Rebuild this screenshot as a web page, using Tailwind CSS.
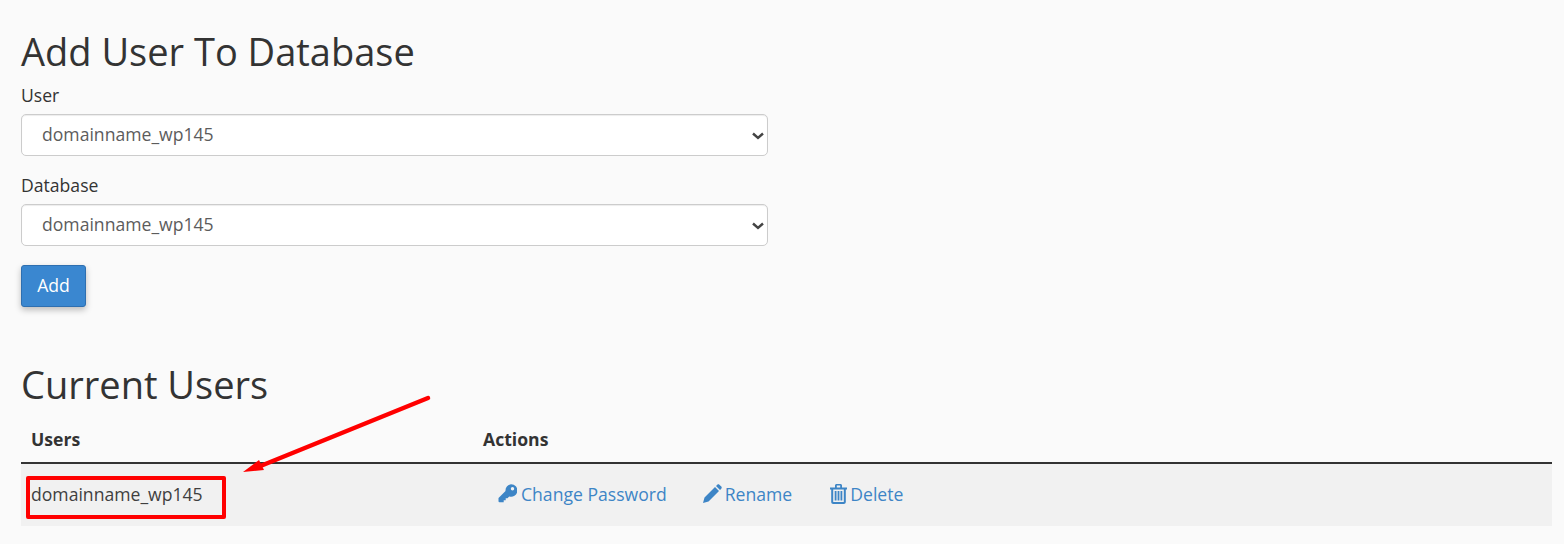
<!DOCTYPE html>
<html>
<head>
<meta charset="utf-8">
<script src="https://cdn.jsdelivr.net/npm/@tailwindcss/browser@4"></script>
</head>
<body class="bg-[#fafafa] font-['Open_Sans',sans-serif] text-[#333] overflow-hidden">
<div class="relative w-[1564px] h-[544px] px-[21px] pt-[28px]">
  <h1 class="text-[38px] leading-[46px] font-normal text-[#333]">Add User To Database</h1>
  <form class="w-[747px]">
    <label class="block mt-[9px] text-[17.6px] leading-[24px] font-medium">User</label>
    <div class="relative mt-[7px]">
      <select class="block w-full h-[42px] pl-[20px] pb-[2px] appearance-none bg-white border border-[#ccc] rounded-[5px] text-[17.6px] text-[#5c5c5c] shadow-[inset_0_1px_1px_rgba(0,0,0,0.075)]"><option>domainname_wp145</option></select>
      <svg class="absolute right-[4px] top-[18px] w-[12px] h-[8px]" viewBox="0 0 12 8" fill="none" stroke="#444" stroke-width="2.400"><path d="M1 1.500l5 4.500 5-4.500"/></svg>
    </div>
    <label class="block mt-[17px] text-[17.6px] leading-[24px] font-medium">Database</label>
    <div class="relative mt-[7px]">
      <select class="block w-full h-[42px] pl-[20px] pb-[2px] appearance-none bg-white border border-[#ccc] rounded-[5px] text-[17.6px] text-[#5c5c5c] shadow-[inset_0_1px_1px_rgba(0,0,0,0.075)]"><option>domainname_wp145</option></select>
      <svg class="absolute right-[4px] top-[18px] w-[12px] h-[8px]" viewBox="0 0 12 8" fill="none" stroke="#444" stroke-width="2.400"><path d="M1 1.500l5 4.500 5-4.500"/></svg>
    </div>
    <button type="button" class="block mt-[19px] w-[65px] h-[42px] pb-[2px] bg-[#3a87d0] border border-[#2e6fb0] rounded-[3px] text-white text-[17.6px] shadow-[0_3px_6px_rgba(0,0,0,0.25)]">Add</button>
  </form>
  <h2 class="mt-[54px] text-[38px] leading-[46px] font-normal text-[#333]">Current Users</h2>
  <table class="mt-[9px] w-[1531px] border-collapse text-[17.6px]">
    <thead>
      <tr class="h-[47px] border-b-2 border-[#333] text-left">
        <th class="w-[452px] pl-[10px] font-bold text-[17.6px]">Users</th>
        <th class="pl-[10px] font-bold text-[17.6px]">Actions</th>
      </tr>
    </thead>
    <tbody>
      <tr class="h-[63px] bg-[#f1f1f1]">
        <td class="pl-[10px] pb-[2px] text-[#3f3f3f]">domainname_wp145</td>
        <td class="pl-[25px] pb-[2px] text-[#3d85c6]">
          <div class="flex items-center">
            <a class="flex items-center gap-[4px]"><svg class="w-[19px] h-[19px]" viewBox="0 0 19 19" fill="currentColor"><path fill-rule="evenodd" d="M13 .2a6.300 6.300 0 1 1-1.800 12.300L9.500 14.200H7.700v2h-2v2H1.500a1 1 0 0 1-1-1v-3.200l7-7A6.300 6.300 0 0 1 13 .2zM14.500 3a1.700 1.700 0 1 0 0 3.400 1.700 1.700 0 0 0 0-3.400z"/></svg>Change Password</a>
            <a class="flex items-center gap-[3px] ml-[36px]"><svg class="w-[19px] h-[19px]" viewBox="0 0 19 19" fill="currentColor"><path d="M0 19l1.500-5.500L12 3l4 4L5.500 17.500zM13 2l1.300-1.300c.6-.6 1.500-.6 2.100 0l1.900 1.900c.6.600.6 1.500 0 2.100L17 6z"/></svg>Rename</a>
            <a class="flex items-center gap-[3px] ml-[38px]"><svg class="w-[17px] h-[20px]" viewBox="0 0 17 20" fill="currentColor"><path fill-rule="evenodd" d="M0 3.500h5V1.500C5 .7 5.700 0 6.500 0h4c.8 0 1.500.7 1.500 1.500v2h5v2h-1.200V18c0 1.100-.9 2-2 2H3.200c-1.100 0-2-.9-2-2V5.500H0v-2zM6.800 3.500h3.400V1.600H6.800v1.900zM3.200 5.500V18h10.600V5.500H3.200z"/><rect x="4.700" y="7" width="1.800" height="9.500"/><rect x="7.600" y="7" width="1.800" height="9.500"/><rect x="10.500" y="7" width="1.800" height="9.500"/></svg>Delete</a>
          </div>
        </td>
      </tr>
    </tbody>
  </table>
  <div class="absolute left-[26px] top-[476px] w-[200px] h-[43px] border-[4px] border-[#f00] rounded-[2px]"></div>
  <svg class="absolute left-0 top-0 pointer-events-none" width="1564" height="544" fill="#f00"><line x1="428" y1="398" x2="258" y2="467" stroke="#f00" stroke-width="4.500" stroke-linecap="round"/><polygon points="243,472 259,460 264,470"/></svg>
</div>
</body>
</html>
